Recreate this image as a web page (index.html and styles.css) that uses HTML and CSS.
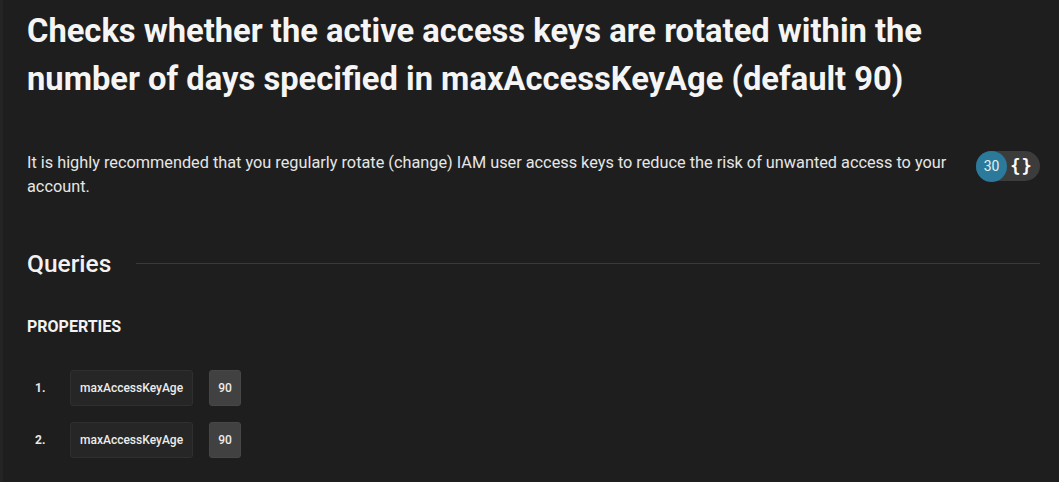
FILE: index.html
```html
<!DOCTYPE html>
<html>
<head>
<meta charset="utf-8">
<link rel="stylesheet" href="styles.css">
</head>
<body>
<main class="page">
  <h1 class="title">Checks whether the active access keys are rotated within the number of days specified in maxAccessKeyAge (default 90)</h1>
  <div class="desc-row">
    <p class="desc">It is highly recommended that you regularly rotate (change) IAM user access keys to reduce the risk of unwanted access to your account.</p>
    <div class="badge">
      <span class="badge-count">30</span>
      <span class="badge-icon">{}</span>
    </div>
  </div>
  <div class="section-head">
    <h2 class="section-title">Queries</h2>
    <div class="rule"></div>
  </div>
  <h3 class="props-title">PROPERTIES</h3>
  <ol class="props">
    <li class="prop"><span class="num">1.</span><span class="key">maxAccessKeyAge</span><span class="val">90</span></li>
    <li class="prop"><span class="num">2.</span><span class="key">maxAccessKeyAge</span><span class="val">90</span></li>
  </ol>
</main>
</body>
</html>
```

FILE: styles.css
```css
html, body {
  margin: 0;
  padding: 0;
  background: #1e1e1e;
}
body {
  font-family: Roboto, "Noto Sans", sans-serif;
  color: #f2f2f2;
  border-left: 3px solid #242424;
  min-height: 482px;
  box-sizing: border-box;
}
.page {
  padding: 7px 19px 0 24px;
}
.title {
  margin: 0;
  font-size: 32.7px;
  font-weight: 700;
  line-height: 48px;
  color: #f5f5f5;
  max-width: 960px;
}
.desc-row {
  display: flex;
  align-items: flex-start;
  margin-top: 48px;
  gap: 20px;
}
.desc {
  margin: 0;
  flex: 1;
  font-size: 16.3px;
  line-height: 24px;
  color: #e6e6e6;
}
.badge {
  display: flex;
  align-items: center;
  background: #3c3c3c;
  border-radius: 16px;
  height: 30px;
  margin-top: 0;
  width: 64px;
  flex: none;
}
.badge-count {
  width: 31px;
  height: 31px;
  border-radius: 50%;
  background: #2b7a9b;
  color: #e8eef2;
  font-size: 14px;
  display: flex;
  align-items: center;
  justify-content: center;
}
.badge-icon {
  flex: 1;
  text-align: center;
  font-family: "DejaVu Sans Mono", monospace;
  font-weight: 700;
  font-size: 17px;
  color: #ffffff;
  letter-spacing: 1px;
  padding-right: 4px;
}
.section-head {
  display: flex;
  align-items: center;
  gap: 25px;
  margin-top: 50px;
}
.section-title {
  margin: 0;
  font-size: 24.5px;
  font-weight: 500;
  line-height: 30px;
  color: #f2f2f2;
}
.rule {
  flex: 1;
  height: 1px;
  background: #3a3a3a;
  margin-top: -1px;
}
.props-title {
  margin: 38px 0 0;
  font-size: 16px;
  font-weight: 700;
  line-height: 20px;
  color: #f2f2f2;
}
.props {
  list-style: none;
  margin: 33px 0 0;
  padding: 0;
  display: flex;
  flex-direction: column;
  gap: 16px;
}
.prop {
  display: flex;
  align-items: center;
  gap: 16px;
}
.num {
  width: 27px;
  padding-left: 8px;
  box-sizing: border-box;
  font-size: 12px;
  font-weight: 700;
  color: #e8e8e8;
}
.key {
  height: 36px;
  box-sizing: border-box;
  display: flex;
  align-items: center;
  padding: 0 9px;
  background: #262626;
  border: 1px solid #2f2f2f;
  border-radius: 3px;
  font-size: 12px;
  font-weight: 500;
  color: #ececec;
}
.val {
  height: 36px;
  width: 32px;
  box-sizing: border-box;
  display: flex;
  align-items: center;
  justify-content: center;
  background: #414141;
  border: 1px solid #474747;
  border-radius: 3px;
  font-size: 12px;
  font-weight: 500;
  color: #ececec;
}
```
